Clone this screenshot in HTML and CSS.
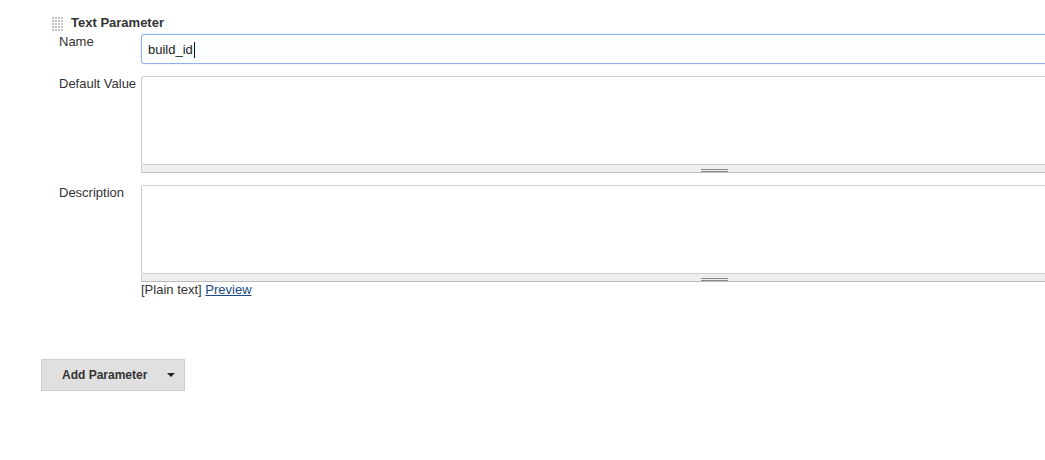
FILE: index.html
```html
<!DOCTYPE html>
<html lang="en">
<head>
<meta charset="utf-8">
<title>Text Parameter</title>
<link rel="stylesheet" href="styles.css">
</head>
<body>
<div class="page">
  <div class="param">
    <div class="param-head">
      <svg class="grip" width="12" height="14" viewBox="0 0 12 14" aria-hidden="true">
        <g fill="#c4c4c4">
          <rect x="0" y="0" width="2" height="2"/><rect x="3" y="0" width="2" height="2"/><rect x="6" y="0" width="2" height="2"/><rect x="9" y="0" width="2" height="2"/>
          <rect x="0" y="3" width="2" height="2"/><rect x="3" y="3" width="2" height="2"/><rect x="6" y="3" width="2" height="2"/><rect x="9" y="3" width="2" height="2"/>
          <rect x="0" y="6" width="2" height="2"/><rect x="3" y="6" width="2" height="2"/><rect x="6" y="6" width="2" height="2"/><rect x="9" y="6" width="2" height="2"/>
          <rect x="0" y="9" width="2" height="2"/><rect x="3" y="9" width="2" height="2"/><rect x="6" y="9" width="2" height="2"/><rect x="9" y="9" width="2" height="2"/>
          <rect x="0" y="12" width="2" height="2"/><rect x="3" y="12" width="2" height="2"/><rect x="6" y="12" width="2" height="2"/><rect x="9" y="12" width="2" height="2"/>
        </g>
      </svg>
      <span class="param-title">Text Parameter</span>
    </div>
    <div class="fields">
      <div class="field">
        <label class="label">Name</label>
        <div class="control">
          <div class="textbox">build_id<span class="caret"></span></div>
        </div>
      </div>
      <div class="field">
        <label class="label">Default Value</label>
        <div class="control">
          <textarea class="area"></textarea>
          <div class="handle"><span class="handle-lines"></span></div>
        </div>
      </div>
      <div class="field">
        <label class="label">Description</label>
        <div class="control">
          <textarea class="area"></textarea>
          <div class="handle"><span class="handle-lines"></span></div>
          <div class="markup">[Plain text] <a href="#" class="preview">Preview</a></div>
        </div>
      </div>
    </div>
  </div>
  <div class="actions">
    <button class="add-btn" type="button"><span>Add Parameter</span><span class="arrow"></span></button>
  </div>
</div>
</body>
</html>
```
FILE: styles.css
```css
html, body {
  margin: 0;
  padding: 0;
  overflow: hidden;
  background: #fff;
}

body {
  font: 13px/16px "Liberation Sans", Arial, sans-serif;
  color: #333;
}

.page {
  width: 1400px;
  padding: 15px 0 0 41px;
}

.param-head {
  display: flex;
  align-items: flex-start;
  margin-left: 11px;
  height: 16px;
}

.grip {
  display: block;
  flex: none;
  margin-top: 2px;
}

.param-title {
  font-weight: bold;
  margin-left: 7px;
}

.fields {
  margin: 3px 0 0 18px;
  display: flex;
  flex-direction: column;
  gap: 12px;
}

.field {
  display: flex;
  align-items: flex-start;
}

.label {
  flex: none;
  width: 82px;
}

.control {
  flex: none;
  width: 1145px;
}

.textbox {
  box-sizing: border-box;
  height: 30px;
  border: 1px solid #8fb1e6;
  border-radius: 3px;
  box-shadow: 0 0 2px rgba(120, 160, 230, 0.45);
  padding: 1px 6px 0;
  line-height: 28px;
  color: #222;
  background: #fdfeff;
  display: flex;
  align-items: center;
}

.caret {
  display: inline-block;
  width: 1px;
  height: 16px;
  background: #111;
  margin-left: 1px;
}

.area {
  display: block;
  box-sizing: border-box;
  width: 100%;
  height: 89px;
  margin: 0;
  padding: 4px;
  border: 1px solid #cdcdcd;
  border-radius: 2px;
  resize: none;
  background: #fff;
  font: inherit;
}

.handle {
  box-sizing: border-box;
  height: 8px;
  padding-top: 4px;
  background: #eeeeee;
  border-left: 1px solid #cfcfcf;
  border-bottom: 1px solid #bdbdbd;
  display: flex;
  justify-content: center;
}

.handle-lines {
  display: block;
  box-sizing: border-box;
  width: 27px;
  height: 3px;
  border-top: 1px solid #8a8a8a;
  border-bottom: 1px solid #8a8a8a;
}

.markup {
  line-height: 16px;
}

.preview {
  color: #204a87;
  text-decoration: underline;
}

.actions {
  margin-top: 61px;
}

.add-btn {
  box-sizing: border-box;
  width: 144px;
  height: 32px;
  padding: 0 9px 0 20px;
  display: flex;
  align-items: center;
  background: #e0e0e0;
  border: 1px solid #cfcfcf;
  border-radius: 0;
  font: bold 12px/16px "Liberation Sans", Arial, sans-serif;
  color: #333;
  cursor: pointer;
}

.arrow {
  margin-left: auto;
  width: 0;
  height: 0;
  border-top: 4px solid #222;
  border-left: 4px solid transparent;
  border-right: 4px solid transparent;
}
```
